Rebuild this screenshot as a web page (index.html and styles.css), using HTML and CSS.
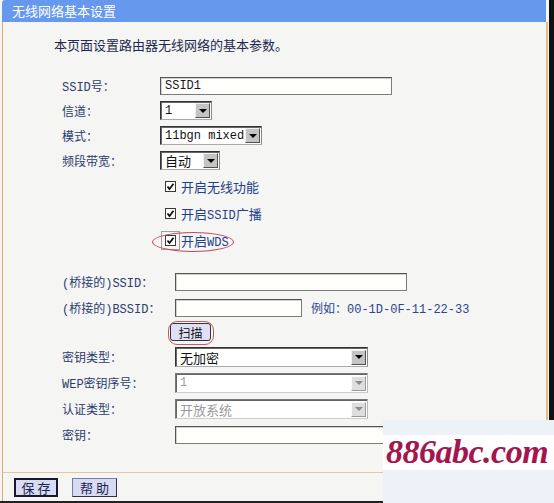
FILE: index.html
```html
<!DOCTYPE html>
<html lang="zh-CN">
<head>
    <meta charset="UTF-8">
    <title>无线网络基本设置</title>
    <link rel="stylesheet" href="styles.css">
</head>
<body>
    <div class="frame">
        <div class="title">无线网络基本设置</div>

        <div class="panel">
            <p class="intro">本页面设置路由器无线网络的基本参数。</p>

            <div class="form">
                <div class="row">
                    <label>SSID号：</label>
                    <input class="text w232" value="SSID1">
                </div>
                <div class="row">
                    <label>信道：</label>
                    <div class="select w52"><span>1</span><span class="arrow"></span></div>
                </div>
                <div class="row">
                    <label>模式：</label>
                    <div class="select w102"><span>11bgn mixed</span><span class="arrow"></span></div>
                </div>
                <div class="row">
                    <label>频段带宽：</label>
                    <div class="select w60"><span class="cjk">自动</span><span class="arrow"></span></div>
                </div>

                <div class="row check">
                    <span class="cb"><svg viewBox="0 0 9 9" width="9" height="9"><path d="M1.5 4.5 L3.5 7 L7.5 1.8" fill="none" stroke="#111" stroke-width="1.8"/></svg></span>
                    <span class="cb-text">开启无线功能</span>
                </div>
                <div class="row check">
                    <span class="cb"><svg viewBox="0 0 9 9" width="9" height="9"><path d="M1.5 4.5 L3.5 7 L7.5 1.8" fill="none" stroke="#111" stroke-width="1.8"/></svg></span>
                    <span class="cb-text">开启<span class="lat">SSID</span>广播</span>
                </div>
                <div class="row check">
                    <span class="wds">
                        <span class="cb focus"><svg viewBox="0 0 9 9" width="9" height="9"><path d="M1.5 4.5 L3.5 7 L7.5 1.8" fill="none" stroke="#111" stroke-width="1.8"/></svg></span>
                        <span class="cb-text">开启<span class="lat">WDS</span></span>
                    </span>
                </div>
            </div>

            <div class="form sec2">
                <div class="row">
                    <label>(桥接的)SSID：</label>
                    <input class="text w232" value="">
                </div>
                <div class="row">
                    <label>(桥接的)BSSID：</label>
                    <input class="text w127" value="">
                    <span class="hint">例如：00-1D-0F-11-22-33</span>
                </div>
                <div class="row scan-row">
                    <span class="scan"><button class="btn-scan">扫描</button></span>
                </div>
                <div class="row">
                    <label>密钥类型：</label>
                    <div class="select w193 tall"><span class="cjk">无加密</span><span class="arrow"></span></div>
                </div>
                <div class="row">
                    <label>WEP密钥序号：</label>
                    <div class="select w193 tall off"><span>1</span><span class="arrow"></span></div>
                </div>
                <div class="row">
                    <label>认证类型：</label>
                    <div class="select w193 tall off"><span class="cjk">开放系统</span><span class="arrow"></span></div>
                </div>
                <div class="row">
                    <label>密钥：</label>
                    <input class="text w232" value="">
                </div>
            </div>
        </div>

        <div class="bar">
            <button class="btn save">保 存</button>
            <button class="btn help">帮 助</button>
        </div>
    </div>

    <div class="wm"><span>886abc.com</span></div>
</body>
</html>
```

FILE: styles.css
```css
* {
    margin: 0;
    padding: 0;
    box-sizing: border-box;
}

body {
    width: 554px;
    height: 503px;
    overflow: hidden;
    position: relative;
    background: #f5f5f3;
    font-family: "Liberation Mono", "Noto Sans CJK SC", monospace;
    font-size: 12px;
    color: #2a3c70;
}

.frame {
    height: 503px;
    display: flex;
    flex-direction: column;
    border-right: 5px solid #111;
    border-bottom: 2px solid #222;
}

.title {
    height: 22px;
    margin: 0 3px 0 2px;
    padding-left: 10px;
    background: #6699ee;
    border-top-left-radius: 3px;
    color: #fff;
    font-family: "Noto Sans CJK SC", sans-serif;
    font-size: 13px;
    line-height: 22px;
}

.panel {
    height: 451px;
    margin: 0 1px 0 2px;
    padding-left: 59px;
    border-left: 1px solid #dcaa6e;
    border-right: 2px solid #e5bb88;
    border-bottom: 1px solid #e6c49c;
}

.intro {
    margin: 14px 0 0 -8px;
    height: 18px;
    line-height: 18px;
    font-family: "Noto Sans CJK SC", sans-serif;
    font-size: 13px;
    color: #1e2850;
}

.form {
    margin-top: 19px;
}

.row {
    display: flex;
    align-items: center;
    height: 25px;
}

.row label {
    width: 98px;
    flex-shrink: 0;
}

.row.check {
    height: 27px;
    padding-left: 103px;
}

.sec2 {
    margin-top: 15px;
}

.sec2 .row {
    height: 26px;
}

.sec2 .row label {
    width: 113px;
}

.sec2 .scan-row {
    height: 23px;
}

/* text fields */
.text {
    height: 18px;
    padding: 0 4px;
    border: 1px solid #7c7c7c;
    border-top-color: #555;
    border-left-color: #555;
    box-shadow: inset 1px 1px 0 #d0d0d0;
    background: #fffffc;
    font: inherit;
    color: #1a1a1a;
    outline: none;
}

.w232 { width: 232px; }
.w127 { width: 127px; }

.hint {
    margin-left: 9px;
    color: #2c4690;
}

/* drop-downs */
.select {
    display: flex;
    align-items: center;
    justify-content: space-between;
    height: 19px;
    padding: 0 1px 0 4px;
    background: #fff;
    border: 1px solid #333;
    border-right-color: #888;
    border-bottom-color: #aaa;
    box-shadow: inset 1px 1px 0 #666;
    color: #111;
}

.select.tall { height: 20px; }

.w52 { width: 52px; }
.w60 { width: 60px; }
.w102 { width: 102px; }
.w193 { width: 193px; }

.cjk {
    font-family: "Noto Sans CJK SC", sans-serif;
    font-size: 13px;
}

.arrow {
    display: flex;
    align-items: center;
    justify-content: center;
    width: 15px;
    height: 15px;
    background: #c4c4c4;
    border: 1px solid;
    border-color: #f0f0f0 #505050 #505050 #f0f0f0;
}

.arrow::before {
    content: "";
    border-left: 4px solid transparent;
    border-right: 4px solid transparent;
    border-top: 4px solid #000;
}

.select.off {
    color: #9a9a9a;
    border-color: #777 #bbb #ccc #777;
}

.select.off .arrow {
    background: #dedede;
    border-color: #fafafa #9a9a9a #9a9a9a #fafafa;
}

.select.off .arrow::before {
    border-top-color: #8a8a8a;
}

/* checkboxes */
.cb {
    display: inline-flex;
    align-items: center;
    justify-content: center;
    width: 11px;
    height: 11px;
    margin-right: 5px;
    border: 1px solid #3a3a3a;
    background: #fff;
}

.cb-text {
    font-family: "Noto Sans CJK SC", sans-serif;
    font-size: 13px;
    color: #1d3f8e;
}

.lat {
    font-family: "Liberation Mono", monospace;
    font-size: 12px;
}

.wds {
    position: relative;
    display: inline-flex;
    align-items: center;
}

.wds::after {
    content: "";
    position: absolute;
    left: -13px;
    top: 50%;
    width: 80px;
    height: 18px;
    margin-top: -9px;
    border: 1px solid #c24a5c;
    border-radius: 50%;
}

.cb.focus {
    outline: 1px solid #a0a0a0;
    outline-offset: 3px;
}

/* scan button */
.scan {
    position: relative;
    margin-left: 108px;
}

.scan::after {
    content: "";
    position: absolute;
    left: -2px;
    top: -2px;
    right: -3px;
    bottom: -3px;
    border: 1px solid #c65a68;
    border-radius: 9px;
}

.btn-scan {
    width: 41px;
    height: 18px;
    background: #dfe0f5;
    border: 1px solid #333;
    border-radius: 3px;
    font-family: "Noto Sans CJK SC", sans-serif;
    font-size: 12px;
    color: #111;
}

/* bottom bar */
.bar {
    flex: 1;
    display: flex;
    align-items: flex-start;
    gap: 14px;
    margin-left: 2px;
    padding: 5px 0 0 11px;
    border-left: 1px solid #dcaa6e;
}

.btn {
    height: 19px;
    background: #d8dcf2;
    font-family: "Noto Sans CJK SC", sans-serif;
    font-size: 13px;
    line-height: 15px;
    color: #1a2450;
}

.save {
    width: 44px;
    border: 2px solid #181830;
}

.help {
    width: 45px;
    border: 1px solid #7080a8;
    border-right-color: #303050;
    border-bottom-color: #303050;
}

/* watermark over the bottom-right corner */
.wm {
    position: absolute;
    left: 383px;
    top: 420px;
    right: 0;
    bottom: 0;
    background: #edf1f8;
}

.wm span {
    display: block;
    margin-top: 15px;
    height: 35px;
    padding-left: 3px;
    background: #fff;
    font-family: "Liberation Serif", serif;
    font-style: italic;
    font-weight: bold;
    font-size: 34px;
    line-height: 33px;
    letter-spacing: -0.5px;
    color: #a4164e;
}
```
